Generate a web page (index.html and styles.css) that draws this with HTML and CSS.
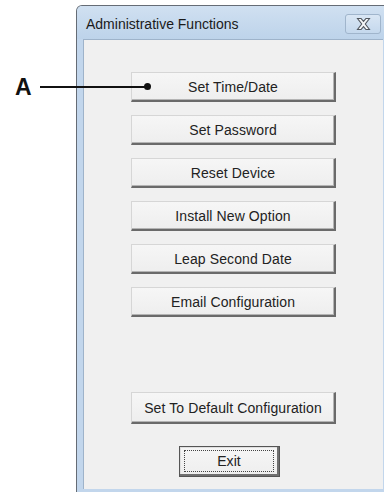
FILE: index.html
```html
<!DOCTYPE html>
<html lang="en">
<head>
  <meta charset="UTF-8" />
  <title>Administrative Functions</title>
  <link rel="stylesheet" href="styles.css">
</head>
<body>
<div id="page">
  <div id="window">
    <div class="titlebar">
      <span class="title">Administrative Functions</span>
      <button class="close-btn" title="Close">
        <svg width="15" height="12" viewBox="0 0 15 12">
          <path d="M1.5 0.5 H5 L7.5 3.4 L10 0.5 H13.5 L9.3 6 L13.5 11.5 H10 L7.5 8.6 L5 11.5 H1.5 L5.7 6 Z" fill="#f4f6f8" stroke="#50565e" stroke-width="1.1"/>
        </svg>
      </button>
    </div>
    <div class="frame">
      <div class="client">
        <div class="btn-group">
          <button class="btn">Set Time/Date</button>
          <button class="btn">Set Password</button>
          <button class="btn">Reset Device</button>
          <button class="btn">Install New Option</button>
          <button class="btn">Leap Second Date</button>
          <button class="btn">Email Configuration</button>
        </div>
        <button class="btn btn-default-cfg">Set To Default Configuration</button>
        <button class="btn btn-exit"><span class="focus">Exit</span></button>
      </div>
    </div>
  </div>

  <!-- callout label -->
  <div class="callout">
    <span class="callout-letter">A</span>
    <span class="callout-line"></span>
    <span class="callout-dot"></span>
  </div>
</div>
</body>
</html>
```

FILE: styles.css
```css
body {
  margin: 0;
  background: #ffffff;
  font-family: "Liberation Sans", Arial, sans-serif;
  overflow: hidden;
}

#page {
  position: relative;
  width: 384px;
  height: 492px;
  overflow: hidden;
}

#window {
  margin: 5px 0 0 76px;
  width: 314px;
  height: 487px;
  border: 1px solid #656c75;
  border-bottom: none;
  border-radius: 6px 6px 0 0;
  background: #c2d6ec;
  box-sizing: border-box;
  overflow: hidden;
}

.titlebar {
  height: 33px;
  display: flex;
  align-items: center;
  justify-content: space-between;
  padding: 0 8px 0 9px;
  background: linear-gradient(#d0e0f1, #bdd3ea);
}

.title {
  font-size: 14px;
  color: #1a1a1a;
  padding-top: 2px;
}

.close-btn {
  width: 36px;
  height: 20px;
  margin-top: 3px;
  border: 1px solid #a0b5cc;
  border-radius: 3px;
  background: linear-gradient(#d9e6f4, #c4d8ed);
  display: flex;
  align-items: center;
  justify-content: center;
  padding: 0;
}

.frame {
  padding: 0 6px;
  background: #c2d6ec;
}

.client {
  height: 450px;
  background: #f0f0f0;
  border-top: 1px solid #9eb3ca;
  border-left: 1px solid #9eb3ca;
  display: flex;
  flex-direction: column;
  align-items: center;
  padding-top: 32px;
  box-sizing: border-box;
}

.btn-group {
  display: flex;
  flex-direction: column;
  gap: 13px;
}

.btn {
  width: 205px;
  height: 30px;
  font-family: "Liberation Sans", Arial, sans-serif;
  font-size: 14px;
  letter-spacing: 0.1px;
  color: #222;
  background: linear-gradient(#f6f6f6, #eeeeee);
  border-top: 1px solid #d6d6d6;
  border-left: 1px solid #d6d6d6;
  border-right: 2px solid #6a6a6a;
  border-bottom: 2px solid #6a6a6a;
  box-shadow: inset -1px -1px 0 #b4b4b4;
  padding: 0;
}

.btn-default-cfg {
  margin-top: 75px;
  height: 32px;
}

.btn-exit {
  width: 101px;
  height: 31px;
  margin-top: 22px;
  margin-right: 8px;
  border: 1px solid #555;
  box-shadow: inset -2px -2px 0 #707070, inset 1px 1px 0 #e0e0e0;
  padding: 3px 5px 4px 4px;
}

.focus {
  display: block;
  height: 100%;
  border: 1px dotted #444;
  box-sizing: border-box;
  line-height: 21px;
}

.callout {
  position: absolute;
  left: 15px;
  top: 76px;
  width: 140px;
  height: 22px;
}

.callout-letter {
  position: absolute;
  left: 0;
  top: -2px;
  font-family: "Liberation Sans", Arial, sans-serif;
  font-weight: bold;
  font-size: 23px;
  color: #111;
}

.callout-line {
  position: absolute;
  left: 25px;
  top: 10px;
  width: 108px;
  height: 1.5px;
  background: #111;
}

.callout-dot {
  position: absolute;
  left: 129px;
  top: 7px;
  width: 7px;
  height: 7px;
  border-radius: 50%;
  background: #111;
}
```
